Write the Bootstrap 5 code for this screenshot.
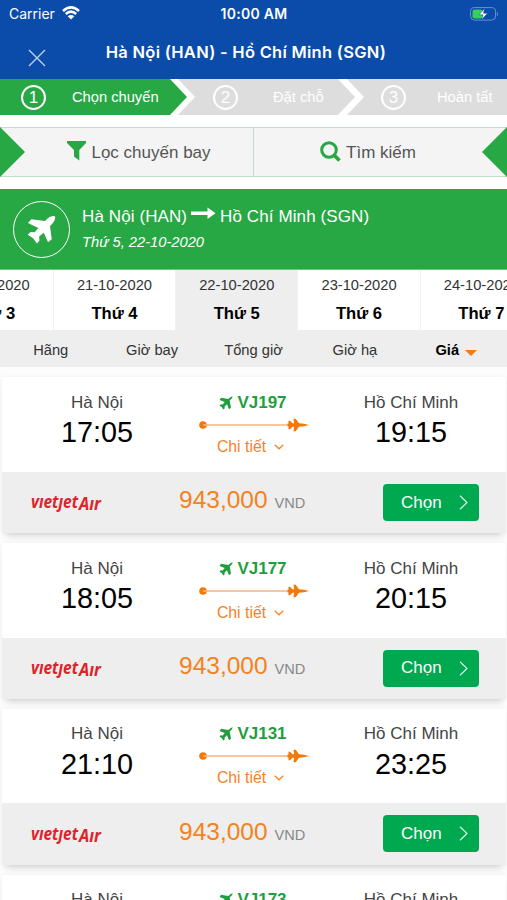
<!DOCTYPE html>
<html lang="vi">
<head>
<meta charset="utf-8">
<meta name="viewport" content="width=device-width, initial-scale=1">
<title>Hà Nội (HAN) - Hồ Chí Minh (SGN)</title>
<link href="https://cdn.jsdelivr.net/npm/bootstrap@5.3.0/dist/css/bootstrap.min.css" rel="stylesheet">
<style>
body{font-family:"Liberation Sans",Arial,sans-serif;background:#fcfcfc;color:#333;height:900px;overflow:hidden;font-size:17px;line-height:20px}
svg{display:block;flex:none}
.app-head{height:79px;background:#0b4cab;color:#fff;font-family:Inter,sans-serif}
.status{height:28px;font-size:14px;padding:0 8px 0 9px}
.status>div{flex:1 1 0}
.wifi{margin-left:-1px;margin-top:-3px}
.clock{font-weight:600;font-size:14px;letter-spacing:.3px}
.title-row{height:51px;padding:0 28px}
.title-row h1{font-size:16.5px;font-weight:600;line-height:20px;letter-spacing:.27px;padding-bottom:4px;padding-right:33px}
.steps{height:48px;background:#fff;padding-bottom:12px;font-size:14.7px;color:#fff}
.step-a,.step-b,.step-c{height:36px}
.step-a{width:187px;background:#28a745;clip-path:polygon(0 0,170px 0,100% 50%,170px 100%,0 100%);padding-left:21px}
.step-b{width:177px;margin-left:-9px;background:#ddd;clip-path:polygon(0 0,160px 0,100% 50%,160px 100%,0 100%,17px 50%);padding-left:35px}
.step-c{flex:1;margin-left:-8px;background:#ddd;clip-path:polygon(0 0,100% 0,100% 100%,0 100%,17px 50%);padding-left:34px}
.step-a .lbl{margin-left:26px}
.step-b .lbl{margin-left:35px}
.step-c .lbl{margin-left:31px}
.num{width:25px;height:25px;border:2px solid #fff;border-radius:50%;font-size:17px;line-height:21px;text-align:center;flex:none}
.tools{height:50px;background:#f4f4f4;border:1px solid #bfdfc8;border-width:1px 0;color:#555}
.tool{flex:1 1 0;gap:5px;padding-top:2px}
.tri{width:25px;height:50px;margin:-1px 0;background:#28a745;flex:none}
.tri-l{clip-path:polygon(0 0,100% 50%,0 100%)}
.tri-r{clip-path:polygon(100% 0,0 50%,100% 100%)}
.tool-sep{width:1px;background:#bfdfc8}
.route{height:93px;border-top:12px solid #fff;background:#28a745;color:#fff;padding:0 13px;border-bottom:1px solid #6fc483}
.ring{width:57px;height:57px;border:1px solid #fff;border-radius:50%;flex:none}
.route-to{letter-spacing:.1px}
.route-date{font-size:14.7px;font-style:italic;margin-top:5px}
.days{height:60px;background:#fff}
.day{width:122.3px;flex:none;border-right:1px solid #f1f1f1;text-align:center;font-size:14.7px;color:#333;padding-top:5px}
.day b{display:block;font-size:16.6px;color:#000;margin-top:9px}
.day.on{background:#eee}
.days-in{margin-left:-68.500px;height:60px}
.sorts{height:37px;background:#eee;font-size:14.7px;color:#333;padding-top:3px}
.sorts>div{width:101.4px;text-align:center}
.caret{width:0;height:0;border:6px solid transparent;border-top-color:#f27a14;border-bottom:0;margin-top:5px;margin-left:-2px}
.flights{margin:10.3px 1px 0 2px}
.flight{height:156px;margin-bottom:9.75px;box-shadow:0 7px 7px -4px rgba(0,0,0,.14),0 0 4px rgba(0,0,0,.05);background:#eee}
.f-top{height:94.500px;background:#fff}
.place{width:190px;text-align:center;padding-top:15.700px;color:#444}
.clockt{font-size:28.8px;line-height:32px;color:#000;margin-top:3.500px}
.mid{width:124px;padding-top:15.700px;text-align:center}
.code{color:#1f9e3e;font-weight:700;padding-right:2px}
.line{margin:5px auto 0 7px}
.more{color:#f5821f;font-size:15.8px;margin-top:5px;padding-right:7px}
.f-bot{height:61px;padding:0 27px 0 28px}
.brand{fill:#e0222b;font-family:"Open Sans",sans-serif;font-weight:700;font-style:italic}
.price{padding-left:77px;color:#f58220;font-size:24.5px;line-height:28px;padding-bottom:1px}
.price small{font-size:14.6px;color:#888;margin-left:7px}
.pick,.pick:hover{width:96px;height:37px;background:#00a84f;color:#fff;border:0;border-radius:4px;font-size:17px;padding:0 11px 0 18px}
</style>
<script src="https://cdn.jsdelivr.net/npm/bootstrap@5.3.0/dist/js/bootstrap.bundle.min.js"></script>
</head>
<body>
<svg width="0" height="0" class="position-absolute" aria-hidden="true">
<symbol id="plane" viewBox="0 0 30 30"><path d="M23 2.200Q27.500 .3 28.800 1.300Q30 2.800 27.800 6.700Q26.700 8.700 23.800 11.400L25.600 25.200L21.800 28.300L17.300 18.300L12.600 22.300L12.800 26.600L10.200 29.400L6.600 24.200L.8 20.400L3.600 17.600L8 17.800L11.700 13.400L1 8.200L4.600 4.400L18.700 6.200Q21 3.200 23 2.200Z"/></symbol>
<symbol id="jet" viewBox="0 0 14 14"><path d="M13.700.3Q13.700 2 10.700 4.600L12 11.800L10 13.200L8 8.300L5.600 10.400L5.800 12.200L4.200 13.400L2.800 11L.5 9.800L1.700 8.300L3.700 8.500L5.700 6.100L.6 3.900L2 1.700L9.300 2.900Q12 .4 13.700.3Z"/></symbol>
<symbol id="path" viewBox="0 0 110 14"><circle cx="4" cy="7" r="3.800" fill="#f5780a"/><path d="M4 7H90" stroke="#f8b27c" stroke-width="1.400"/><path d="M89.500 2.700h1.500l2.500 2.600h1.600L94.500.8h2.200l3.300 4.400Q105 5.500 110 7Q105 8.400 100 8.800l-3.300 4.400h-2.200L95.100 8.700h-1.600l-2.500 2.600h-1.500V8.500h-1v-3h1Z" fill="#f5780a"/></symbol>
<symbol id="down" viewBox="0 0 10 6"><path d="M.7.7L5 4.800L9.300.7" fill="none" stroke="#f58220" stroke-width="1.200"/></symbol>
<symbol id="next" viewBox="0 0 9 15"><path d="M1 .7L8 7.500L1 14.300" fill="none" stroke="#d9f2e4" stroke-width="1.200"/></symbol>
</svg>

<header class="app-head">
  <div class="status d-flex align-items-center">
    <div class="d-flex align-items-center gap-2">
      <span>Carrier</span>
      <svg class="wifi" width="18" height="14" viewBox="0 0 18 14" fill="none" stroke="#fff" stroke-width="2.500"><path d="M1 5Q9-2.200 17 5M3.800 8Q9 3.300 14.200 8"/><path d="M9 13.500L5.700 10.200Q9 7.700 12.300 10.200Z" fill="#fff" stroke="none"/></svg>
    </div>
    <span class="clock">10:00 AM</span>
    <div class="d-flex justify-content-end">
      <svg width="30" height="15" viewBox="0 0 30 15"><rect x="1.600" y=".6" width="25" height="12.500" rx="4" fill="none" stroke="#6d93cd"/><path d="M28 4.500q2 2.500 0 5Z" fill="#6d93cd"/><rect x="3.500" y="2.500" width="10" height="9" rx="2" fill="#35d15a"/><path d="M15.500 1.500L10 7.800h4l-1.500 5L18.500 6.200h-4Z" fill="#fff" stroke="#0b4cab" stroke-width=".5"/></svg>
    </div>
  </div>
  <div class="title-row d-flex align-items-center">
    <svg width="18" height="18" viewBox="0 0 18 18" stroke="#bdd0ec" stroke-width="1.400" class="mt-2"><path d="M1 1L17 17M17 1L1 17"/></svg>
    <h1 class="flex-grow-1 text-center mb-0 text-nowrap">Hà Nội (HAN) - Hồ Chí Minh (SGN)</h1>
  </div>
</header>

<nav class="steps d-flex">
  <div class="step-a d-flex align-items-center"><span class="num">1</span><span class="lbl">Chọn chuyến</span></div>
  <div class="step-b d-flex align-items-center"><span class="num">2</span><span class="lbl">Đặt chỗ</span></div>
  <div class="step-c d-flex align-items-center"><span class="num">3</span><span class="lbl text-nowrap">Hoàn tất</span></div>
</nav>

<div class="tools d-flex">
  <div class="tri tri-l"></div>
  <div class="tool d-flex align-items-center justify-content-center"><svg class="mb-1" width="19" height="20" viewBox="0 0 19 20" fill="#28a745"><path d="M0 0H19V2L12.300 9V19.500L7 15.500V9L0 2Z"/></svg>Lọc chuyến bay</div>
  <div class="tool-sep"></div>
  <div class="tool d-flex align-items-center justify-content-center"><svg class="mb-1" width="21" height="21" viewBox="0 0 21 21" fill="none" stroke="#28a745" stroke-width="3"><circle cx="9" cy="9" r="7.300"/><path d="M14 14L19.500 19.500" stroke-width="3.800"/></svg>Tìm kiếm</div>
  <div class="tri tri-r"></div>
</div>

<section class="route d-flex align-items-center">
  <div class="ring d-flex align-items-center justify-content-center"><svg width="29" height="29" fill="#fff"><use href="#plane"/></svg></div>
  <div class="ps-2 ms-1">
    <div class="route-to d-flex align-items-center"><span>Hà Nội (HAN)</span><svg class="mx-1 mb-2" width="25" height="12" viewBox="0 0 25 12" fill="#fff"><path d="M0 4.500H16.500V.5L24.500 6.200L16.500 12V7.900H0Z"/></svg><span>Hồ Chí Minh (SGN)</span></div>
    <div class="route-date">Thứ 5, 22-10-2020</div>
  </div>
</section>

<div class="days overflow-hidden"><div class="days-in d-flex">
  <div class="day">20-10-2020<b>Thứ 3</b></div>
  <div class="day">21-10-2020<b>Thứ 4</b></div>
  <div class="day on">22-10-2020<b>Thứ 5</b></div>
  <div class="day">23-10-2020<b>Thứ 6</b></div>
  <div class="day">24-10-2020<b>Thứ 7</b></div>
</div></div>

<div class="sorts d-flex align-items-center">
  <div>Hãng</div><div>Giờ bay</div><div>Tổng giờ</div><div>Giờ hạ</div>
  <div class="d-flex align-items-center justify-content-center gap-2 fw-bold text-black"><span>Giá</span><i class="caret"></i></div>
</div>

<main class="flights" id="flights"></main>

<script>
const flights = [["17:05","VJ197","19:15"],["18:05","VJ177","20:15"],["21:10","VJ131","23:25"],["21:35","VJ173","23:45"]];
document.getElementById("flights").innerHTML = flights.map(([dep, code, arr]) => `
<article class="flight">
  <div class="f-top d-flex">
    <div class="place"><div>Hà Nội</div><div class="clockt">${dep}</div></div>
    <div class="mid">
      <div class="code d-flex align-items-center justify-content-center gap-1"><svg width="14" height="14" fill="#1f9e3e"><use href="#jet"/></svg>${code}</div>
      <svg class="line" width="110" height="14"><use href="#path"/></svg>
      <div class="more d-flex align-items-center justify-content-center gap-2">Chi tiết<svg width="10" height="6"><use href="#down"/></svg></div>
    </div>
    <div class="place"><div>Hồ Chí Minh</div><div class="clockt">${arr}</div></div>
  </div>
  <div class="f-bot d-flex align-items-center">
    <svg class="brand mt-1" width="72" height="20" viewBox="0 0 72 20" role="img" aria-label="VietjetAir"><text x="1" y="14" font-size="18.500" textLength="47" lengthAdjust="spacingAndGlyphs">vıetȷet</text><text x="49" y="15.500" font-size="17" textLength="22" lengthAdjust="spacingAndGlyphs">Aır</text></svg>
    <div class="price">943,000<small>VND</small></div>
    <button class="pick btn d-flex align-items-center justify-content-between ms-auto" type="button">Chọn<svg width="9" height="15"><use href="#next"/></svg></button>
  </div>
</article>`).join("");
</script>
</body>
</html>
